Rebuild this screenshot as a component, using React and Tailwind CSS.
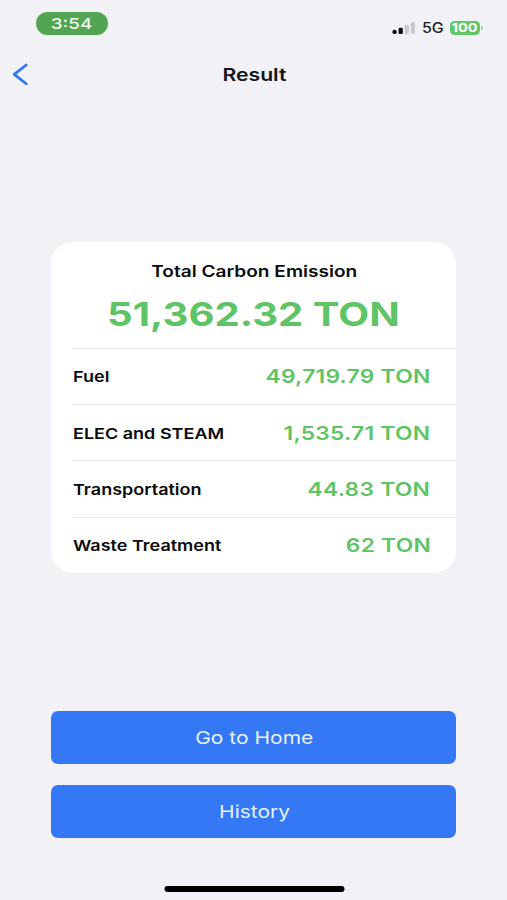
import React from "react";

const rows = [
  { label: "Fuel", value: "49,719.79 TON" },
  { label: "ELEC and STEAM", value: "1,535.71 TON" },
  { label: "Transportation", value: "44.83 TON" },
  { label: "Waste Treatment", value: "62 TON" },
];

function StatusBar() {
  return (
    <div className="flex h-[47px] shrink-0 items-start justify-between pl-[35.5px] pr-[24px]">
      <div className="mt-[12px] flex h-[23px] w-[72px] items-center justify-center rounded-full bg-[#52a552] text-[15px] leading-none font-medium text-[#f1faef]">
        <span className="origin-center scale-x-[1.25]">3:54</span>
      </div>
      <div className="mt-[20px] flex h-[15px] items-center">
        <svg width="24" height="14" viewBox="0 0 24 14" className="mr-[6px]">
          <rect x="0.5" y="8.8" width="4.2" height="4.2" rx="1.8" fill="#0b0b0d" />
          <rect x="6.6" y="6.8" width="4.2" height="6.2" rx="1.3" fill="#0b0b0d" />
          <rect x="12.7" y="4" width="4.2" height="9" rx="1.3" fill="#c9c9ce" />
          <rect x="18.8" y="1" width="4.2" height="12" rx="1.3" fill="#c9c9ce" />
        </svg>
        <span className="w-[21px] origin-left scale-x-[1.14] text-[14px] leading-none font-medium text-[#1c1c1e]">5G</span>
        <div className="ml-[7px] flex h-[14px] w-[30px] items-center justify-center rounded-[4.5px] bg-[#64c766] text-[12px] leading-none font-bold text-white">
          <span className="scale-x-[1.2]">100</span>
        </div>
        <div className="ml-[1px] h-[4px] w-[2px] rounded-r-full bg-[#8bd28e]" />
      </div>
    </div>
  );
}

export default function App() {
  return (
    <div className="flex h-[900px] w-[507px] flex-col overflow-hidden bg-[#f1f1f6] font-['Inter','Liberation_Sans',sans-serif]">
      <StatusBar />
      <header className="grid h-[54px] shrink-0 grid-cols-[60px_1fr_60px] items-center">
        <button aria-label="Back" className="pl-[12px]">
          <svg width="17" height="22" viewBox="0 0 17 22" fill="none">
            <path d="M14.2 2L2.2 11.4L14.2 20.8" stroke="#2e75f0" strokeWidth="2.7" strokeLinecap="round" strokeLinejoin="round" />
          </svg>
        </button>
        <h1 className="flex justify-center pt-[3px] pl-[1px] text-[17.5px] font-semibold text-[#151517]">
          <span className="scale-x-[1.21]">Result</span>
        </h1>
      </header>

      <main className="mt-[141px] ml-[51px] h-[331px] w-[405px] shrink-0 overflow-hidden rounded-[22px] bg-white">
        <section className="flex h-[105.5px] flex-col items-center pt-[19px]">
          <h2 className="origin-center translate-x-[0.5px] scale-x-[1.23] text-[15.5px] leading-[21px] font-semibold text-[#0b0b0d]">Total Carbon Emission</h2>
          <p className="mt-[12px] origin-center scale-x-[1.215] text-[33px] leading-[40px] font-bold whitespace-nowrap text-[#5fc466]">51,362.32 TON</p>
        </section>
        {rows.map((row) => (
          <div key={row.label} className="ml-[21px] flex h-[56.4px] items-center justify-between border-t border-[#ebebed] pt-[2.5px] pr-[25.5px] pl-[0.7px]">
            <span className="origin-left scale-x-[1.2] text-[15px] font-semibold whitespace-nowrap text-[#0b0b0d]">{row.label}</span>
            <span className="origin-right scale-x-[1.2] text-[19px] font-semibold tracking-[0.2px] whitespace-nowrap text-[#5fc466]">{row.value}</span>
          </div>
        ))}
      </main>

      <div className="mt-[137.5px] ml-[51px] flex w-[405px] shrink-0 flex-col gap-[21.5px]">
        <button className="flex h-[53px] items-center justify-center rounded-[7px] bg-[#3478f6] pt-[2px] pl-[1.5px] text-[17.5px] text-[#e8f1ff]">
          <span className="scale-x-[1.2]">Go to Home</span>
        </button>
        <button className="flex h-[53px] items-center justify-center rounded-[7px] bg-[#3478f6] pt-[2px] pl-[1.5px] text-[17.5px] text-[#e8f1ff]">
          <span className="scale-x-[1.2]">History</span>
        </button>
      </div>

      <div className="mt-auto mb-[8.5px] h-[5.5px] w-[180px] translate-x-[0.5px] self-center rounded-full bg-black" />
    </div>
  );
}
